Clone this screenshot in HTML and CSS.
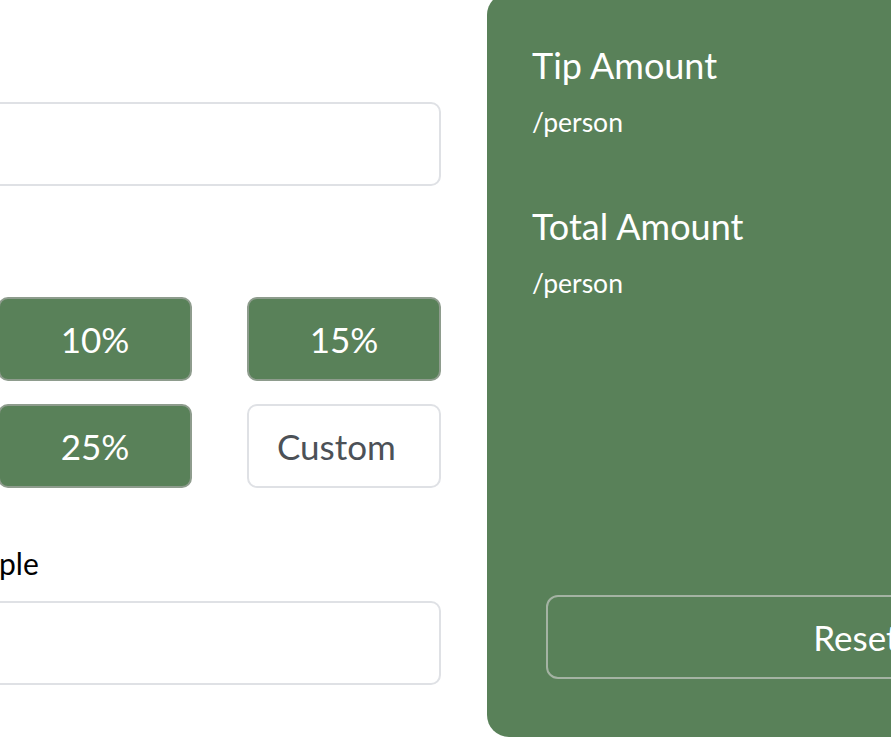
FILE: index.html
```html
<!DOCTYPE html>
<html lang="en">
<head>
<meta charset="utf-8">
<title>Tip Calculator</title>
<link rel="stylesheet" href="styles.css">
</head>
<body>
<main class="calc">
  <section class="inputs">
    <div class="field">
      <label class="label" for="bill">Bill</label>
      <input class="text-input" id="bill" type="text">
    </div>
    <div class="field field-tips">
      <span class="label">Select Tip %</span>
      <div class="tips">
        <button class="tip">5%</button>
        <button class="tip">10%</button>
        <button class="tip">15%</button>
        <button class="tip">20%</button>
        <button class="tip">25%</button>
        <input class="tip custom" type="text" placeholder="Custom">
      </div>
    </div>
    <div class="field field-people">
      <label class="label" for="people">Number of People</label>
      <input class="text-input" id="people" type="text">
    </div>
  </section>
  <section class="results">
    <div class="result">
      <h2 class="result-title">Tip Amount</h2>
      <p class="result-sub">/person</p>
    </div>
    <div class="result">
      <h2 class="result-title">Total Amount</h2>
      <p class="result-sub">/person</p>
    </div>
    <button class="reset">Reset</button>
  </section>
</main>
</body>
</html>
```
FILE: styles.css
```css
html, body {
  margin: 0;
  padding: 0;
  background: #ffffff;
  overflow: hidden;
}
body {
  font-family: Lato, "Open Sans", sans-serif;
  color: #000;
}
.calc {
  display: flex;
  gap: 46px;
  margin-left: -251px;
  margin-top: -7px;
  width: 1476px;
}
.inputs {
  width: 692px;
  flex: none;
  display: flex;
  flex-direction: column;
  padding-top: 53px;
  box-sizing: border-box;
}
.field {
  display: flex;
  flex-direction: column;
  gap: 20px;
}
.field-tips {
  margin-top: 55px;
}
.field-people {
  margin-top: 57px;
}
.label {
  font-size: 30px;
  line-height: 36px;
  padding-left: 51px;
}
.text-input {
  height: 84px;
  box-sizing: border-box;
  border: 2px solid #dfe1e5;
  border-radius: 10px;
  background: #fff;
  font: inherit;
  font-size: 32px;
  padding: 0 20px;
  outline: none;
}
.tips {
  display: grid;
  grid-template-columns: repeat(3, 194px);
  column-gap: 55px;
  row-gap: 23px;
}
.tip {
  height: 84px;
  box-sizing: border-box;
  border: 2px solid #8e9c8d;
  border-radius: 10px;
  background: #598159;
  color: #fff;
  font-family: Lato, "Open Sans", sans-serif;
  font-size: 35px;
  text-align: center;
  padding: 0;
}
.custom {
  background: #fff;
  border-color: #dfe1e5;
  color: #4c5157;
  width: 194px;
  text-align: left;
  padding-left: 28px;
  outline: none;
}
.custom::placeholder {
  color: #4c5157;
  opacity: 1;
}
.results {
  width: 738px;
  height: 744px;
  flex: none;
  box-sizing: border-box;
  background: #598159;
  border-radius: 22px;
  padding: 50px 59px 58px 45px;
  display: flex;
  flex-direction: column;
  color: #fff;
}
.result + .result {
  margin-top: 66px;
}
.result-title {
  margin: 0;
  font-weight: 400;
  font-size: 36px;
  line-height: 44px;
}
.result-sub {
  margin: 19px 0 0;
  font-size: 26.5px;
  line-height: 32px;
}
.reset {
  margin-top: auto;
  margin-left: 14px;
  height: 84px;
  box-sizing: border-box;
  border: 2px solid #a4b3a3;
  border-radius: 12px;
  background: transparent;
  color: #fff;
  font-family: Lato, "Open Sans", sans-serif;
  font-size: 35px;
}
```
